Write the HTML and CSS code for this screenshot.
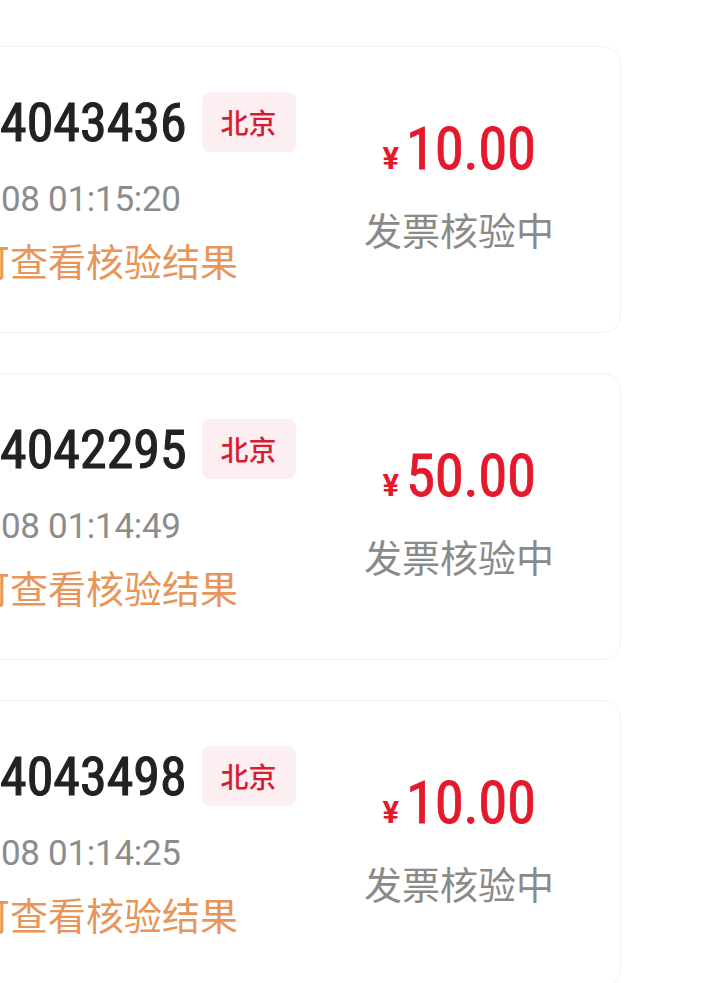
FILE: index.html
```html
<!DOCTYPE html>
<html lang="zh-CN">
<head>
<meta charset="utf-8">
<title>发票核验</title>
<link rel="stylesheet" href="styles.css">
</head>
<body>
<div class="list">
  <div class="card">
    <div class="info">
      <div class="row-top"><span class="num">4043436</span><span class="tag">北京</span></div>
      <div class="time">08 01:15:20</div>
      <div class="hint">可查看核验结果</div>
    </div>
    <div class="side">
      <div class="price"><span class="cur">¥</span><span class="amt">10.00</span></div>
      <div class="status">发票核验中</div>
    </div>
  </div>
  <div class="card">
    <div class="info">
      <div class="row-top"><span class="num">4042295</span><span class="tag">北京</span></div>
      <div class="time">08 01:14:49</div>
      <div class="hint">可查看核验结果</div>
    </div>
    <div class="side">
      <div class="price"><span class="cur">¥</span><span class="amt">50.00</span></div>
      <div class="status">发票核验中</div>
    </div>
  </div>
  <div class="card">
    <div class="info">
      <div class="row-top"><span class="num">4043498</span><span class="tag">北京</span></div>
      <div class="time">08 01:14:25</div>
      <div class="hint">可查看核验结果</div>
    </div>
    <div class="side">
      <div class="price"><span class="cur">¥</span><span class="amt">10.00</span></div>
      <div class="status">发票核验中</div>
    </div>
  </div>
</div>
</body>
</html>
```

FILE: styles.css
```css
html, body {
  margin: 0;
  padding: 0;
  background: #ffffff;
  overflow: hidden;
}

body {
  font-family: Roboto, "Noto Sans CJK SC", sans-serif;
}

.list {
  padding-top: 46px;
  display: flex;
  flex-direction: column;
  gap: 40px;
}

.card {
  box-sizing: border-box;
  height: 287px;
  margin-left: -40px;
  margin-right: 85px;
  padding: 45px 51px 0 40px;
  border: 1px solid #f2f2f2;
  border-radius: 18px;
  background: #ffffff;
  display: flex;
  align-items: flex-start;
  flex-shrink: 0;
}

.info {
  flex: 1;
  display: flex;
  flex-direction: column;
  min-width: 0;
}

.row-top {
  display: flex;
  align-items: center;
  height: 60px;
}

.num {
  font-family: "Roboto Condensed", Roboto, sans-serif;
  font-weight: 400;
  font-size: 54px;
  letter-spacing: 0;
  color: #222222;
  -webkit-text-stroke: 1.1px #222222;
  margin-left: -1px;
}

.tag {
  margin-left: 15px;
  height: 60px;
  width: 94px;
  box-sizing: border-box;
  display: flex;
  align-items: center;
  justify-content: center;
  border-radius: 8px;
  background: #fdeff1;
  color: #d81c33;
  font-family: "Noto Sans CJK SC", sans-serif;
  font-weight: 500;
  font-size: 28px;
}

.time {
  margin-top: 28px;
  height: 40px;
  line-height: 40px;
  font-size: 35px;
  letter-spacing: -0.3px;
  color: #8c8c8c;
}

.hint {
  margin-top: 18px;
  margin-left: -29px;
  height: 44px;
  line-height: 44px;
  font-family: "Noto Sans CJK SC", sans-serif;
  font-size: 38px;
  color: #e8955a;
  white-space: nowrap;
}

.side {
  width: 220px;
  margin-top: 25px;
  display: flex;
  flex-direction: column;
  align-items: center;
}

.price {
  display: flex;
  align-items: baseline;
  height: 64px;
  line-height: 64px;
  color: #e5192c;
}

.cur {
  font-size: 31px;
  font-weight: 700;
  margin-right: 7px;
}

.amt {
  font-family: "Roboto Condensed", Roboto, sans-serif;
  font-size: 59px;
  font-weight: 400;
  letter-spacing: -0.5px;
  -webkit-text-stroke: 0.8px #e5192c;
}

.status {
  margin-top: 26px;
  height: 44px;
  line-height: 44px;
  font-family: "Noto Sans CJK SC", sans-serif;
  font-size: 38px;
  color: #8a8a8a;
}
```
